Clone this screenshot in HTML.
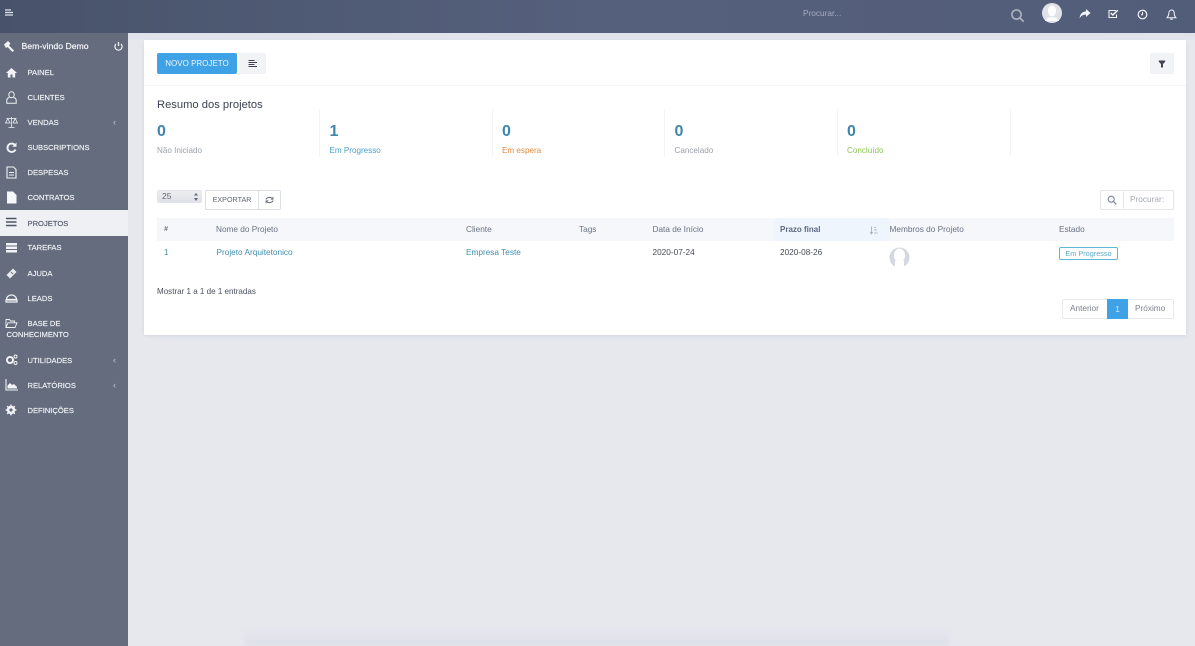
<!DOCTYPE html>
<html lang="pt"><head><meta charset="utf-8"><title>Projetos</title>
<style>
*{box-sizing:border-box}
html,body{margin:0;padding:0;width:1195px;height:646px;overflow:hidden;background:#e6e8ee;font-family:"Liberation Sans",sans-serif}
.a{position:absolute;white-space:nowrap}
#top{position:absolute;left:0;top:0;width:1195px;height:33px;background:linear-gradient(90deg,#48536b,#55607c 50%,#525d7a)}
#topline{position:absolute;left:128px;top:33px;width:1067px;height:7px;background:linear-gradient(#dfe1ea,#e4e6ee)}
#side{position:absolute;left:0;top:33px;width:128px;height:613px;background:#646c7e}
.m{position:absolute;left:27.5px;font-size:7.6px;line-height:10px;color:#f1f3f6;white-space:nowrap;-webkit-text-stroke:.15px #f1f3f6}
.ic{position:absolute;left:5px;width:13px;height:13px;overflow:visible}
.ch{position:absolute;left:113px;font-size:9px;color:#c5c9d2;line-height:10px}
#card{position:absolute;left:144px;top:40px;width:1042px;height:295px;background:#fff;box-shadow:0 1px 3px rgba(90,100,130,.12)}
.t{position:absolute;white-space:nowrap;font-size:8.25px;line-height:10px;color:#6a7283}
.num{position:absolute;top:84px;font-size:16px;line-height:16px;font-weight:bold;color:#3f86ad}
.lab{position:absolute;top:105.5px;font-size:8.1px;line-height:10px;white-space:nowrap}
.vs{position:absolute;top:69px;width:1px;height:48px;background:#f3f4f7}
</style></head><body>
<div id="top"></div><div id="topline"></div>
<svg class="a" style="left:5px;top:9px" width="10" height="8"><path d="M0 1h6M0 3.500h8M0 6h8" stroke="#dfe3ea" stroke-width="1.200"/></svg>
<div class="a" style="left:803px;top:8px;font-size:8.300px;line-height:10px;color:#a5adbd">Procurar...</div>
<svg class="a" style="left:1010px;top:8px" width="15" height="15" viewBox="0 0 15 15"><circle cx="6.500" cy="6.500" r="4.600" fill="none" stroke="#aab0bd" stroke-width="1.600"/><path d="M10 10l3.600 3.600" stroke="#aab0bd" stroke-width="1.800"/></svg>
<svg class="a" style="left:1042px;top:3px" width="20" height="20" viewBox="0 0 20 20"><circle cx="10" cy="10" r="10" fill="#dfe2e9"/><ellipse cx="10" cy="8" rx="4" ry="5.500" fill="#fff"/><path d="M3 18c1-5 13-5 14 0" fill="#fbfbfc"/></svg>
<svg class="a" style="left:1079px;top:9px" width="12" height="11" viewBox="0 0 12 11"><path d="M7 0l4.500 4L7 8V5.600C4 5.600 2 6.600 .6 9.500.8 5.500 3 2.600 7 2.400z" fill="#f2f4f7"/></svg>
<svg class="a" style="left:1108px;top:9px" width="11" height="10" viewBox="0 0 11 10"><path d="M8.500 5.500V8.500H1V1.500H8" fill="none" stroke="#eef0f4" stroke-width="1.100"/><path d="M2.800 4l2 2L9.800 1.200" fill="none" stroke="#fff" stroke-width="1.400"/></svg>
<svg class="a" style="left:1137px;top:9px" width="11" height="11" viewBox="0 0 11 11"><circle cx="5.500" cy="5.500" r="4.300" fill="none" stroke="#f2f4f7" stroke-width="1.200"/><path d="M5.500 2.800v3h-1.500" fill="none" stroke="#f2f4f7" stroke-width="1"/></svg>
<svg class="a" style="left:1166px;top:9px" width="11" height="12" viewBox="0 0 11 12"><path d="M5.500 1C3.500 1 2.800 2.800 2.800 4.500c0 2-1 3.300-1.800 4.300h9c-.8-1-1.800-2.300-1.800-4.300C8.200 2.800 7.500 1 5.500 1z" fill="none" stroke="#eef0f4" stroke-width="1"/><path d="M4.300 10.200h2.400" stroke="#eef0f4" stroke-width="1.200"/></svg>

<div id="side"></div>
<svg class="ic" style="left:3px;top:40px;width:12px;height:13px" viewBox="0 0 12 13"><path d="M1 4.500L5 1l2.500 2.500L6 5.500l5 5-1.500 1.500-5-5L3 8z" fill="#f2f4f7"/></svg>
<div class="a" style="left:21.500px;top:41px;font-size:8.700px;line-height:11px;color:#f4f5f8;-webkit-text-stroke:.2px #f4f5f8">Bem-vindo Demo</div>
<svg class="a" style="left:113px;top:41px" width="11" height="11" viewBox="0 0 11 11"><path d="M3 3a3.600 3.600 0 1 0 5 0" fill="none" stroke="#f1f3f6" stroke-width="1.200"/><path d="M5.500 1v4" stroke="#f1f3f6" stroke-width="1.300"/></svg>

<svg class="ic" style="top:66px" viewBox="0 0 13 13"><path d="M6.500 2L1 7h1.800v4.500h2.700V8.500h2v3h2.700V7H12z" fill="#f1f3f6"/></svg><div class="m" style="top:68px">PAINEL</div>
<svg class="ic" style="top:91px" viewBox="0 0 13 13"><path d="M6.500 .8c-1.700 0-2.700 1.300-2.700 3s1 3 2.700 3 2.700-1.300 2.700-3-1-3-2.700-3zM4.200 6.500C2.500 7 1.800 8 1.800 9.500v2.700h9.400V9.500c0-1.500-.7-2.500-2.400-3" fill="none" stroke="#f1f3f6" stroke-width="1"/></svg><div class="m" style="top:93px">CLIENTES</div>
<svg class="ic" style="top:116px" viewBox="0 0 13 13"><path d="M6.500 1v10M3.500 11.500h6M1.500 2.500h10M2.800 2.500L.6 7h4.400zM10.200 2.500L8 7h4.400z" fill="none" stroke="#f1f3f6" stroke-width=".8"/></svg><div class="m" style="top:118px">VENDAS</div><div class="ch" style="top:117px">‹</div>
<svg class="ic" style="top:141px" viewBox="0 0 13 13"><path d="M10 4.200A4.200 4.200 0 1 0 10.500 8.500" fill="none" stroke="#f1f3f6" stroke-width="1.900"/><path d="M11.500 1.500v4.200H7.300z" fill="#f1f3f6"/></svg><div class="m" style="top:143px">SUBSCRIPTIONS</div>
<svg class="ic" style="top:166px" viewBox="0 0 13 13"><path d="M2 1h6.500l2.500 2.500V12H2zM4 6.500h5M4 9h5" fill="none" stroke="#f1f3f6" stroke-width="1.100"/></svg><div class="m" style="top:168px">DESPESAS</div>
<svg class="ic" style="top:191px" viewBox="0 0 13 13"><path d="M2 .5h6l3.500 3.500v8.500H2z" fill="#f6f7f9"/></svg><div class="m" style="top:193px">CONTRATOS</div>

<div class="a" style="left:0;top:210px;width:128px;height:26px;background:#eef0f4"></div>
<svg class="ic" style="top:216px" viewBox="0 0 13 13"><path d="M1 2.500h10.500M1 6h10.500M1 9.500h10.500" stroke="#4e5564" stroke-width="1.500"/></svg><div class="m" style="top:219px;color:#525a6a;-webkit-text-stroke:.15px #525a6a">PROJETOS</div>

<svg class="ic" style="top:241px" viewBox="0 0 13 13"><path d="M1 2h11v2.500H1zM1 5.500h11V8H1zM1 9h11v2.500H1z" fill="#f1f3f6"/></svg><div class="m" style="top:243px">TAREFAS</div>
<svg class="ic" style="top:267px" viewBox="0 0 13 13"><path d="M8 1.500l3.500 3.500L5 11.500 1.500 8z" fill="#e8ebf0"/><path d="M6 5l2 2" stroke="#646c7e"/></svg><div class="m" style="top:269px">AJUDA</div>
<svg class="ic" style="top:292px" viewBox="0 0 13 13"><path d="M1.500 7.500a5 4.500 0 0 1 10 0zM1 8h11v2H1z" fill="none" stroke="#f1f3f6" stroke-width="1.200"/></svg><div class="m" style="top:294px">LEADS</div>
<svg class="ic" style="top:317px" viewBox="0 0 13 13"><path d="M1 10.500V2.500h3.500l1 1.500h4v1.800M1 10.500h9l2-4.700H3z" fill="none" stroke="#f1f3f6" stroke-width=".9"/></svg>
<div class="m" style="top:319px">BASE DE</div><div class="m" style="top:330px;left:6.500px">CONHECIMENTO</div>
<svg class="ic" style="top:353px" viewBox="0 0 13 13"><circle cx="5" cy="7" r="3" fill="none" stroke="#f1f3f6" stroke-width="2"/><circle cx="10.500" cy="3.500" r="1.500" fill="none" stroke="#f1f3f6"/><circle cx="10.500" cy="10" r="1.500" fill="none" stroke="#f1f3f6"/></svg><div class="m" style="top:356px">UTILIDADES</div><div class="ch" style="top:355px">‹</div>
<svg class="ic" style="top:378px" viewBox="0 0 13 13"><path d="M1 1v11h12" fill="none" stroke="#f1f3f6" stroke-width="1.100"/><path d="M2.500 10.500V7.500L5 5l2 2 2-1 3 3v1.500z" fill="#f1f3f6"/></svg><div class="m" style="top:381px">RELATÓRIOS</div><div class="ch" style="top:380px">‹</div>
<svg class="ic" style="top:404px" viewBox="0 0 13 13"><circle cx="6" cy="6" r="2.900" fill="none" stroke="#f1f3f6" stroke-width="2.600"/><path d="M6 .6v2M6 9.400v2M.6 6h2M9.400 6h2M2.200 2.200l1.400 1.400M8.400 8.400l1.400 1.400M9.800 2.200L8.400 3.600M3.600 8.400L2.200 9.800" stroke="#f1f3f6" stroke-width="1.500"/></svg><div class="m" style="top:406px">DEFINIÇÕES</div>

<div id="card">
<div class="a" style="left:13px;top:13px;width:80px;height:21px;background:#3fa2e6;border-radius:2px;color:#eef7fd;font-size:8px;line-height:21px;text-align:center">NOVO PROJETO</div>
<div class="a" style="left:95px;top:13px;width:27px;height:21px;background:#f2f3f6;border-radius:1px"></div>
<svg class="a" style="left:104px;top:20px" width="10" height="8"><path d="M.5 .5h6M.5 2.500h8.500M.5 4.500h6M.5 6.500h8.500" stroke="#3e4452" stroke-width="1"/></svg>
<div class="a" style="left:1006px;top:13px;width:24px;height:21px;background:#f2f3f6;border-radius:1px"></div>
<svg class="a" style="left:1014px;top:20px" width="8" height="8"><path d="M.8 .5h6.400v1.300L5 4V7.500H3V4L.8 1.800z" fill="#3e4452"/></svg>
<div class="a" style="left:0;top:45px;width:1042px;height:1px;background:#f3f4f7"></div>
<div class="a" style="left:13px;top:58.500px;font-size:11.200px;line-height:13px;color:#3c4250">Resumo dos projetos</div>

<div class="num" style="left:13px">0</div><div class="lab" style="left:13px;color:#9a9fa9">Não Iniciado</div>
<div class="vs" style="left:175px"></div>
<div class="num" style="left:185.500px">1</div><div class="lab" style="left:185.500px;color:#4a9fc4">Em Progresso</div>
<div class="vs" style="left:348px"></div>
<div class="num" style="left:358px">0</div><div class="lab" style="left:358px;color:#e08a3c">Em espera</div>
<div class="vs" style="left:520px"></div>
<div class="num" style="left:530.500px">0</div><div class="lab" style="left:530.500px;color:#9a9fa9">Cancelado</div>
<div class="vs" style="left:693px"></div>
<div class="num" style="left:703px">0</div><div class="lab" style="left:703px;color:#8cc654">Concluído</div>
<div class="vs" style="left:866px"></div>

<div class="a" style="left:13px;top:150px;width:45px;height:13px;background:linear-gradient(#eceef2,#dfe1e7);border:1px solid #e3e5ea;border-radius:2px;color:#5f6675;font-size:8.500px;line-height:10px;padding-left:4px">25</div>
<svg class="a" style="left:49px;top:152px" width="6" height="10"><path d="M3 1l2 2.500H1zM3 9L1 6h4z" fill="#5f6675"/></svg>
<div class="a" style="left:61px;top:150px;width:54px;height:20px;border:1px solid #dcdfe6;border-radius:2px 0 0 2px;background:#fff;color:#5f6675;font-size:7.200px;line-height:18px;text-align:center">EXPORTAR</div>
<div class="a" style="left:114px;top:150px;width:23px;height:20px;border:1px solid #dcdfe6;border-radius:0 2px 2px 0;background:#fff"></div>
<svg class="a" style="left:121px;top:156px" width="9" height="8" viewBox="0 0 9 8"><path d="M1 3.500C1.500 1.500 5.500 .5 7.500 2.500M8 4.500C7.500 6.500 3.500 7.500 1.500 5.500" fill="none" stroke="#5f6675"/><path d="M8 .8v2.400H5.800M1 7.200V4.800h2.200" fill="none" stroke="#5f6675" stroke-width=".8"/></svg>
<div class="a" style="left:956px;top:150px;width:24px;height:20px;border:1px solid #e5e7ec;border-radius:2px 0 0 2px"></div>
<svg class="a" style="left:963px;top:155px" width="10" height="10" viewBox="0 0 10 10"><circle cx="4.200" cy="4.200" r="3" fill="none" stroke="#7b8290" stroke-width="1.100"/><path d="M6.500 6.500l2.800 2.800" stroke="#7b8290" stroke-width="1.200"/></svg>
<div class="a" style="left:979px;top:150px;width:51px;height:20px;border:1px solid #e5e7ec;border-radius:0 2px 2px 0;color:#a5a9b2;font-size:8.300px;line-height:17px;padding-left:6px">Procurar:</div>

<div class="a" style="left:13px;top:178px;width:1017px;height:23px;background:#f5f7fa"></div>
<div class="a" style="left:630px;top:178px;width:116px;height:23px;background:#eef5fc"></div>
<div class="t" style="left:20px;top:185px;font-weight:bold;font-style:italic;font-size:7px">#</div>
<div class="t" style="left:72px;top:185px">Nome do Projeto</div>
<div class="t" style="left:322px;top:185px">Cliente</div>
<div class="t" style="left:435px;top:185px">Tags</div>
<div class="t" style="left:508.500px;top:185px">Data de Início</div>
<div class="t" style="left:636px;top:185px;font-weight:bold;font-size:8px;color:#5b6a82">Prazo final</div>
<svg class="a" style="left:726px;top:186px" width="8" height="9"><path d="M1.500 .5v7M.3 6l1.200 2 1.200-2M4 1.500h2M4 4h3M4 7h3.500" fill="none" stroke="#a4aab5" stroke-width=".8"/></svg>
<div class="t" style="left:745.500px;top:185px">Membros do Projeto</div>
<div class="t" style="left:915px;top:185px">Estado</div>

<div class="t" style="left:20px;top:208px;color:#4d8b99">1</div>
<div class="t" style="left:72.500px;top:208px;color:#3f8eac">Projeto Arquitetonico</div>
<div class="t" style="left:322px;top:208px;color:#3f8eac">Empresa Teste</div>
<div class="t" style="left:508.500px;top:208px;color:#454b58">2020-07-24</div>
<div class="t" style="left:636px;top:208px;color:#454b58">2020-08-26</div>
<svg class="a" style="left:745px;top:207px" width="21" height="21" viewBox="0 0 21 21"><circle cx="10.500" cy="10.500" r="10" fill="#d5d8e0"/><ellipse cx="10.500" cy="8.500" rx="5.500" ry="7" fill="#fff"/><path d="M6 21V14h9v7z" fill="#fff"/></svg>
<div class="a" style="left:915px;top:207px;width:59px;height:13px;border:1px solid #5bb8d6;border-radius:2px;color:#5aa9c8;font-size:7.300px;line-height:11px;text-align:center">Em Progresso</div>

<div class="t" style="left:13px;top:247px;color:#4a505d;font-size:8.050px">Mostrar 1 a 1 de 1 entradas</div>
<div class="a" style="left:918px;top:259px;width:112px;height:20px;border:1px solid #e8eaee;border-radius:2px"></div>
<div class="t" style="left:926px;top:264px;color:#7b808c">Anterior</div>
<div class="a" style="left:963px;top:259px;width:21px;height:20px;background:#3fa2e6;color:#cfeaf9;font-size:8.300px;line-height:20px;text-align:center">1</div>
<div class="t" style="left:991px;top:264px;color:#7b808c">Próximo</div>
</div>
<div class="a" style="left:245px;top:631px;width:705px;height:15px;background:linear-gradient(#e5e6ed,#dde0e8);filter:blur(2px)"></div>
</body></html>
